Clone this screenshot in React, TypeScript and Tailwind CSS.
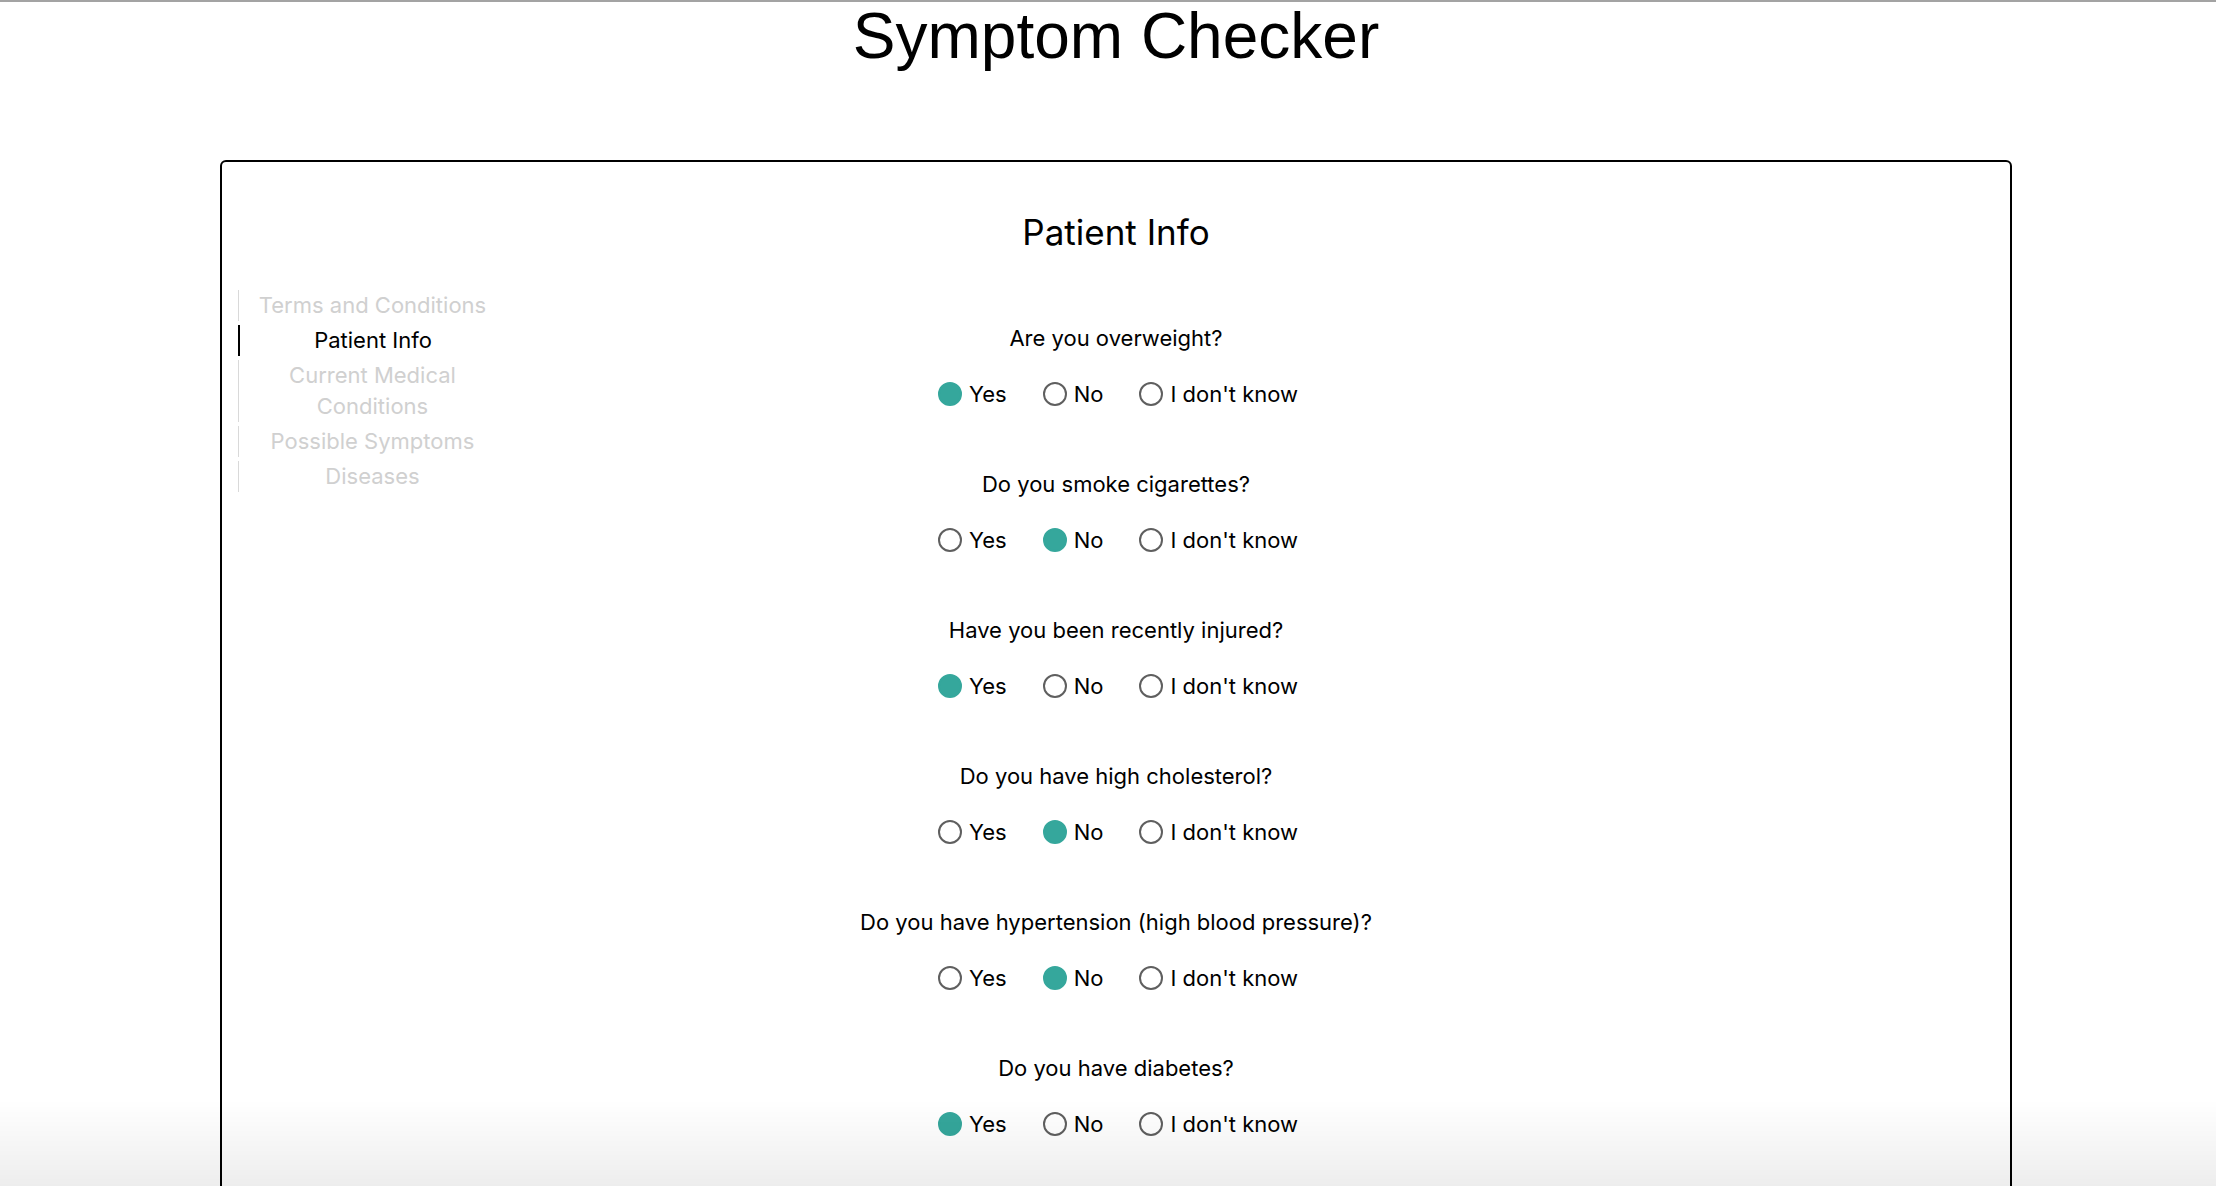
import { useState } from "react";

const steps = [
  "Terms and Conditions",
  "Patient Info",
  "Current Medical Conditions",
  "Possible Symptoms",
  "Diseases",
];

const questions = [
  { id: "overweight", text: "Are you overweight?", value: "yes" },
  { id: "smoke", text: "Do you smoke cigarettes?", value: "no" },
  { id: "injured", text: "Have you been recently injured?", value: "yes" },
  { id: "cholesterol", text: "Do you have high cholesterol?", value: "no" },
  { id: "hypertension", text: "Do you have hypertension (high blood pressure)?", value: "no" },
  { id: "diabetes", text: "Do you have diabetes?", value: "yes" },
];

const options = [
  { value: "yes", label: "Yes" },
  { value: "no", label: "No" },
  { value: "unknown", label: "I don't know" },
];

const App = () => {
  const [answers, setAnswers] = useState<Record<string, string>>(
    Object.fromEntries(questions.map((q) => [q.id, q.value]))
  );

  return (
    <div className="min-h-screen bg-white border-t-2 border-[#a3a3a3] pl-4 font-['Inter',sans-serif] text-black">
      <h1 className="text-center text-[64px] leading-[68px] font-['Liberation_Sans',Arial,sans-serif] font-normal">
        Symptom Checker
      </h1>

      {/* main card */}
      <div className="mx-auto mt-[90px] w-[1792px] border-2 border-black rounded-md pt-[48px] pb-[200px]">
        <h2 className="text-center text-[35px] leading-[44px]">Patient Info</h2>

        <div className="grid grid-cols-[268px_1fr_268px] px-4 mt-[36px]">
          {/* left - steps */}
          <nav className="flex flex-col gap-[4px] self-start">
            {steps.map((s) => (
              <div
                key={s}
                className={
                  s === "Patient Info"
                    ? "border-l-2 border-black text-center text-[22px] leading-[31px] text-black px-2"
                    : "border-l border-[#d9d9d9] text-center text-[22px] leading-[31px] text-[#d0d0d0] px-2"
                }
              >
                {s}
              </div>
            ))}
          </nav>

          {/* middle - questions */}
          <div className="flex flex-col gap-[60px] pt-[33px]">
            {questions.map((q) => (
              <div key={q.id} className="flex flex-col items-center">
                <p className="text-[22px] leading-[30px]">{q.text}</p>
                <div className="flex items-center gap-[36px] mt-[26px] h-[30px] pl-[4px]">
                  {options.map((o) => (
                    <label key={o.value} className="flex items-center gap-[7px] text-[22px] leading-[30px] cursor-pointer">
                      <input
                        type="radio"
                        name={q.id}
                        checked={answers[q.id] === o.value}
                        onChange={() => setAnswers({ ...answers, [q.id]: o.value })}
                        className="appearance-none w-6 h-6 rounded-full border-2 border-[#5f5f5f] bg-white checked:bg-[#35a79c] checked:border-[#35a79c] m-0"
                      />
                      {o.label}
                    </label>
                  ))}
                </div>
              </div>
            ))}
          </div>

          <div />
        </div>
      </div>

      {/* bottom fade */}
      <div className="fixed bottom-0 left-0 right-0 h-[86px] pointer-events-none bg-linear-to-b from-transparent to-black/7" />
    </div>
  );
};

export default App;
